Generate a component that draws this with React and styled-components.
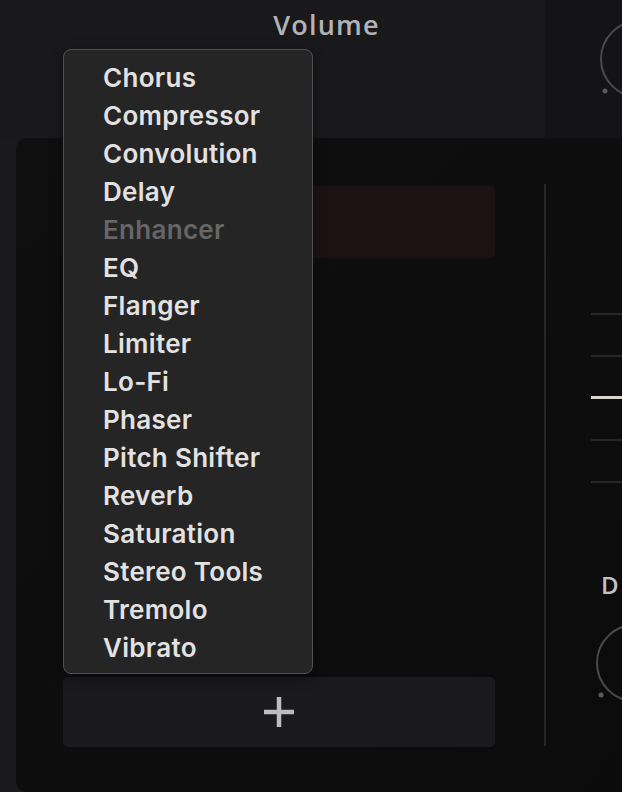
import React from 'react';
import styled, { createGlobalStyle } from 'styled-components';

const GlobalStyle = createGlobalStyle`
  html, body {
    margin: 0;
    padding: 0;
    background: #1a1a1c;
    overflow: hidden;
  }
  body {
    font-family: Inter, "Noto Sans", sans-serif;
  }
`;

const Page = styled.div`
  position: relative;
  width: 622px;
  height: 792px;
  overflow: hidden;
  background: #1a1a1c;
`;

const Header = styled.div`
  display: flex;
  height: 138px;
`;

const HeaderMain = styled.div`
  width: 545px;
  display: flex;
  justify-content: center;
  padding: 7px 0 0 108px;
  box-sizing: border-box;
  background: #19191b;
`;

const HeaderSide = styled.div`
  flex: 1;
  background: #141416;
  padding: 19px 0 0 54px;
  overflow: hidden;
`;

const Label = styled.div`
  font-family: "Open Sans", Inter, sans-serif;
  font-size: ${p => p.size || 27}px;
  font-weight: 600;
  letter-spacing: 1.2px;
  color: #b3b3b5;
  line-height: 1.3;
`;

const Panel = styled.div`
  margin-left: 16px;
  height: 654px;
  background: linear-gradient(135deg, #0f0f10 0%, #0d0d0e 60%, #0b0b0c 100%);
  border-radius: 10px 0 0 10px;
  display: flex;
  padding: 47px 0 0 47px;
  box-sizing: border-box;
`;

const Chain = styled.div`
  width: 432px;
  height: 562px;
  display: flex;
  flex-direction: column;
  justify-content: space-between;
`;

const Slot = styled.div`
  height: 72px;
  margin-top: 1px;
  border-radius: 5px;
  background: #1c1214;
`;

const AddButton = styled.button`
  height: 70px;
  border: none;
  border-radius: 5px;
  background: #1a1a1c;
  color: #bdbdbd;
  display: flex;
  align-items: center;
  justify-content: center;
  padding: 0;
`;

const Divider = styled.div`
  width: 2px;
  height: 562px;
  margin: -1px 0 0 49px;
  background: #252527;
`;

const Side = styled.div`
  flex: 1;
  padding: 128px 0 0 45px;
  display: flex;
  flex-direction: column;
  overflow: hidden;
`;

const Meter = styled.div`
  display: flex;
  flex-direction: column;
  gap: 40px;
`;

const Tick = styled.div`
  height: ${p => (p.active ? 3 : 2)}px;
  margin-top: ${p => (p.active ? -1 : 0)}px;
  background: ${p => (p.active ? '#d9d5d0' : '#262628')};
`;

const SideLabel = styled(Label)`
  margin: 86px 0 0 10px;
  font-size: 24px;
  color: #c2c2c4;
`;

const KnobWrap = styled.div`
  margin: ${p => p.offset || '0'};
`;

const Menu = styled.div`
  position: absolute;
  left: 63px;
  top: 49px;
  width: 250px;
  height: 625px;
  box-sizing: border-box;
  background: #252525;
  border: 1.5px solid #505052;
  border-radius: 8px;
  padding: 9px 0 0 39px;
  box-shadow: 0 4px 14px rgba(0, 0, 0, 0.4);
`;

const MenuItem = styled.div`
  height: 38px;
  line-height: 38px;
  font-family: Inter, "Noto Sans", sans-serif;
  font-size: 26px;
  font-weight: 600;
  letter-spacing: 0.3px;
  color: ${p => (p.disabled ? '#666668' : '#e2e2e2')};
  white-space: nowrap;
`;

const effects = [
  'Chorus',
  'Compressor',
  'Convolution',
  'Delay',
  'Enhancer',
  'EQ',
  'Flanger',
  'Limiter',
  'Lo-Fi',
  'Phaser',
  'Pitch Shifter',
  'Reverb',
  'Saturation',
  'Stereo Tools',
  'Tremolo',
  'Vibrato'
];

const Knob = () => (
  <svg width="90" height="90" viewBox="0 0 90 90">
    <circle cx="40" cy="40" r="38" fill="none" stroke="#4a4a4c" strokeWidth="2" />
    <circle cx="6" cy="72" r="2.5" fill="#5a5a5c" />
  </svg>
);

const Plus = () => (
  <svg width="32" height="32" viewBox="0 0 32 32">
    <path d="M16 1v30M1 16h30" stroke="#bdbdbd" strokeWidth="4.5" />
  </svg>
);

const App = () => {
  return (
    <Page>
      <GlobalStyle />
      <Header>
        <HeaderMain>
          <Label>Volume</Label>
        </HeaderMain>
        <HeaderSide>
          <Knob />
        </HeaderSide>
      </Header>
      <Panel>
        <Chain>
          <Slot />
          <AddButton>
            <Plus />
          </AddButton>
        </Chain>
        <Divider />
        <Side>
          <Meter>
            <Tick />
            <Tick />
            <Tick active />
            <Tick />
            <Tick />
          </Meter>
          <SideLabel>D</SideLabel>
          <KnobWrap offset="23px 0 0 4px">
            <Knob />
          </KnobWrap>
        </Side>
      </Panel>
      <Menu>
        {effects.map(name => (
          <MenuItem key={name} disabled={name === 'Enhancer'}>
            {name}
          </MenuItem>
        ))}
      </Menu>
    </Page>
  );
};

export default App;
